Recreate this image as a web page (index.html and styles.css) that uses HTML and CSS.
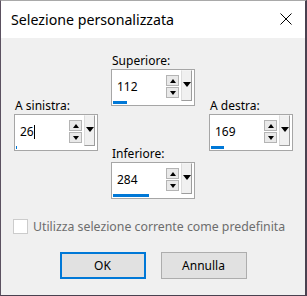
FILE: index.html
```html
<!DOCTYPE html>
<html lang="it">
<head>
<meta charset="utf-8">
<title>Selezione personalizzata</title>
<link rel="stylesheet" href="styles.css">
</head>
<body>
<div class="win">
  <div class="titlebar">
    <span class="title">Selezione personalizzata</span>
    <svg class="close" width="12" height="12" viewBox="0 0 12 12"><path d="M0.5 0.5 L11.5 11.5 M11.5 0.5 L0.5 11.5" stroke="#000" stroke-width="1" fill="none"/></svg>
  </div>
  <div class="content">
    <div class="fields">
      <div class="col side">
        <div class="field">
          <div class="label">A sinistra:</div>
          <div class="spin">
            <div class="edit"><div class="value">26<span class="caret"></span></div><div class="bar" style="width:1px"></div></div>
            <div class="arrows"><span class="arr up"></span><span class="arr down"></span></div>
            <span class="drop"></span>
          </div>
        </div>
      </div>
      <div class="col center">
        <div class="field">
          <div class="label">Superiore:</div>
          <div class="spin">
            <div class="edit"><div class="value">112</div><div class="bar" style="width:14px"></div></div>
            <div class="arrows"><span class="arr up"></span><span class="arr down"></span></div>
            <span class="drop"></span>
          </div>
        </div>
        <div class="field lower">
          <div class="label">Inferiore:</div>
          <div class="spin">
            <div class="edit"><div class="value">284</div><div class="bar" style="width:36px"></div></div>
            <div class="arrows"><span class="arr up"></span><span class="arr down"></span></div>
            <span class="drop"></span>
          </div>
        </div>
      </div>
      <div class="col side right">
        <div class="field">
          <div class="label">A destra:</div>
          <div class="spin">
            <div class="edit"><div class="value">169</div><div class="bar" style="width:13px"></div></div>
            <div class="arrows"><span class="arr up"></span><span class="arr down"></span></div>
            <span class="drop"></span>
          </div>
        </div>
      </div>
    </div>
    <div class="check"><span class="cbox"></span><span>Utilizza selezione corrente come predefinita</span></div>
    <div class="buttons">
      <button class="btn default">OK</button>
      <button class="btn">Annulla</button>
    </div>
  </div>
</div>
</body>
</html>
```
FILE: styles.css
```css
html, body {
  margin: 0;
  padding: 0;
  background: #4a4150;
}
body {
  font-family: "Noto Sans", "Open Sans", sans-serif;
  font-size: 12px;
  color: #000;
}
.win {
  width: 307px;
  height: 296px;
  box-sizing: border-box;
  border-top: 1px solid #a9a9a9;
  border-left: 1px solid #5b5160;
  border-right: 2px solid #4a4150;
  border-bottom: 1px solid #4a4150;
  background: #f0f0f0;
  display: flex;
  flex-direction: column;
}
.titlebar {
  height: 37px;
  background: #fff;
  display: flex;
  justify-content: space-between;
  align-items: flex-start;
  padding: 9px 13px 0 10px;
  box-sizing: border-box;
}
.title {
  font-size: 14.2px;
  line-height: 19px;
}
.close {
  margin-top: 3px;
  display: block;
}
.content {
  padding: 14px 0 0 0;
  display: flex;
  flex-direction: column;
}
.fields {
  display: flex;
  gap: 13px;
  padding-left: 13px;
}
.side {
  margin-top: 45px;
}
.right {
  margin-left: 1px;
}
.field {
  display: flex;
  flex-direction: column;
}
.field.lower {
  margin-top: 39px;
}
.label {
  line-height: 17px;
  height: 17px;
  padding-left: 1px;
}
.spin {
  width: 84px;
  height: 37px;
  box-sizing: border-box;
  border: 1px solid #a6a6a6;
  background: #fff;
  display: flex;
  align-items: stretch;
}
.edit {
  flex: 1;
  display: flex;
  flex-direction: column;
  padding: 9px 0 1px 1px;
}
.value {
  line-height: 16px;
  padding-left: 4px;
  flex: 1;
  display: flex;
  align-items: flex-start;
}
.caret {
  display: inline-block;
  width: 1px;
  height: 14px;
  background: #000;
  margin-top: 1px;
}
.bar {
  height: 3px;
  background: #0078d7;
}
.arrows {
  display: flex;
  flex-direction: column;
  gap: 1px;
  padding-top: 5px;
  margin-right: 2px;
}
.arr {
  width: 13px;
  height: 11px;
  box-sizing: border-box;
  border: 1px solid #b4b4b4;
  background: #e9e9e9;
  display: flex;
  align-items: center;
  justify-content: center;
}
.arr::after {
  content: "";
  width: 0;
  height: 0;
  border-left: 3.5px solid transparent;
  border-right: 3.5px solid transparent;
}
.up::after {
  border-bottom: 4px solid #000;
}
.down::after {
  border-top: 4px solid #000;
}
.drop {
  width: 11px;
  height: 31px;
  box-sizing: border-box;
  margin-right: 2px;
  border: 1px solid;
  border-color: #f4f4f4 #9d9d9d #9d9d9d #dcdcdc;
  background: #f0f0f0;
  display: flex;
  justify-content: center;
  padding-top: 11px;
}
.drop::after {
  content: "";
  width: 0;
  height: 0;
  border-left: 4px solid transparent;
  border-right: 4px solid transparent;
  border-top: 5px solid #000;
}
.check {
  display: flex;
  align-items: center;
  gap: 5px;
  margin-top: 19px;
  padding-left: 12px;
  line-height: 17px;
  color: #6d6d6d;
  font-size: 12.3px;
}
.cbox {
  width: 15px;
  height: 15px;
  box-sizing: border-box;
  border: 1px solid #cccccc;
  background: #fff;
}
.buttons {
  display: flex;
  justify-content: center;
  gap: 15px;
  margin-top: 17px;
}
.btn {
  width: 86px;
  height: 27px;
  box-sizing: border-box;
  border: 1px solid #adadad;
  background: #e1e1e1;
  font-family: "Noto Sans", "Open Sans", sans-serif;
  font-size: 12px;
  color: #000;
  padding: 0;
}
.btn.default {
  border: 2px solid #0078d7;
}
```
